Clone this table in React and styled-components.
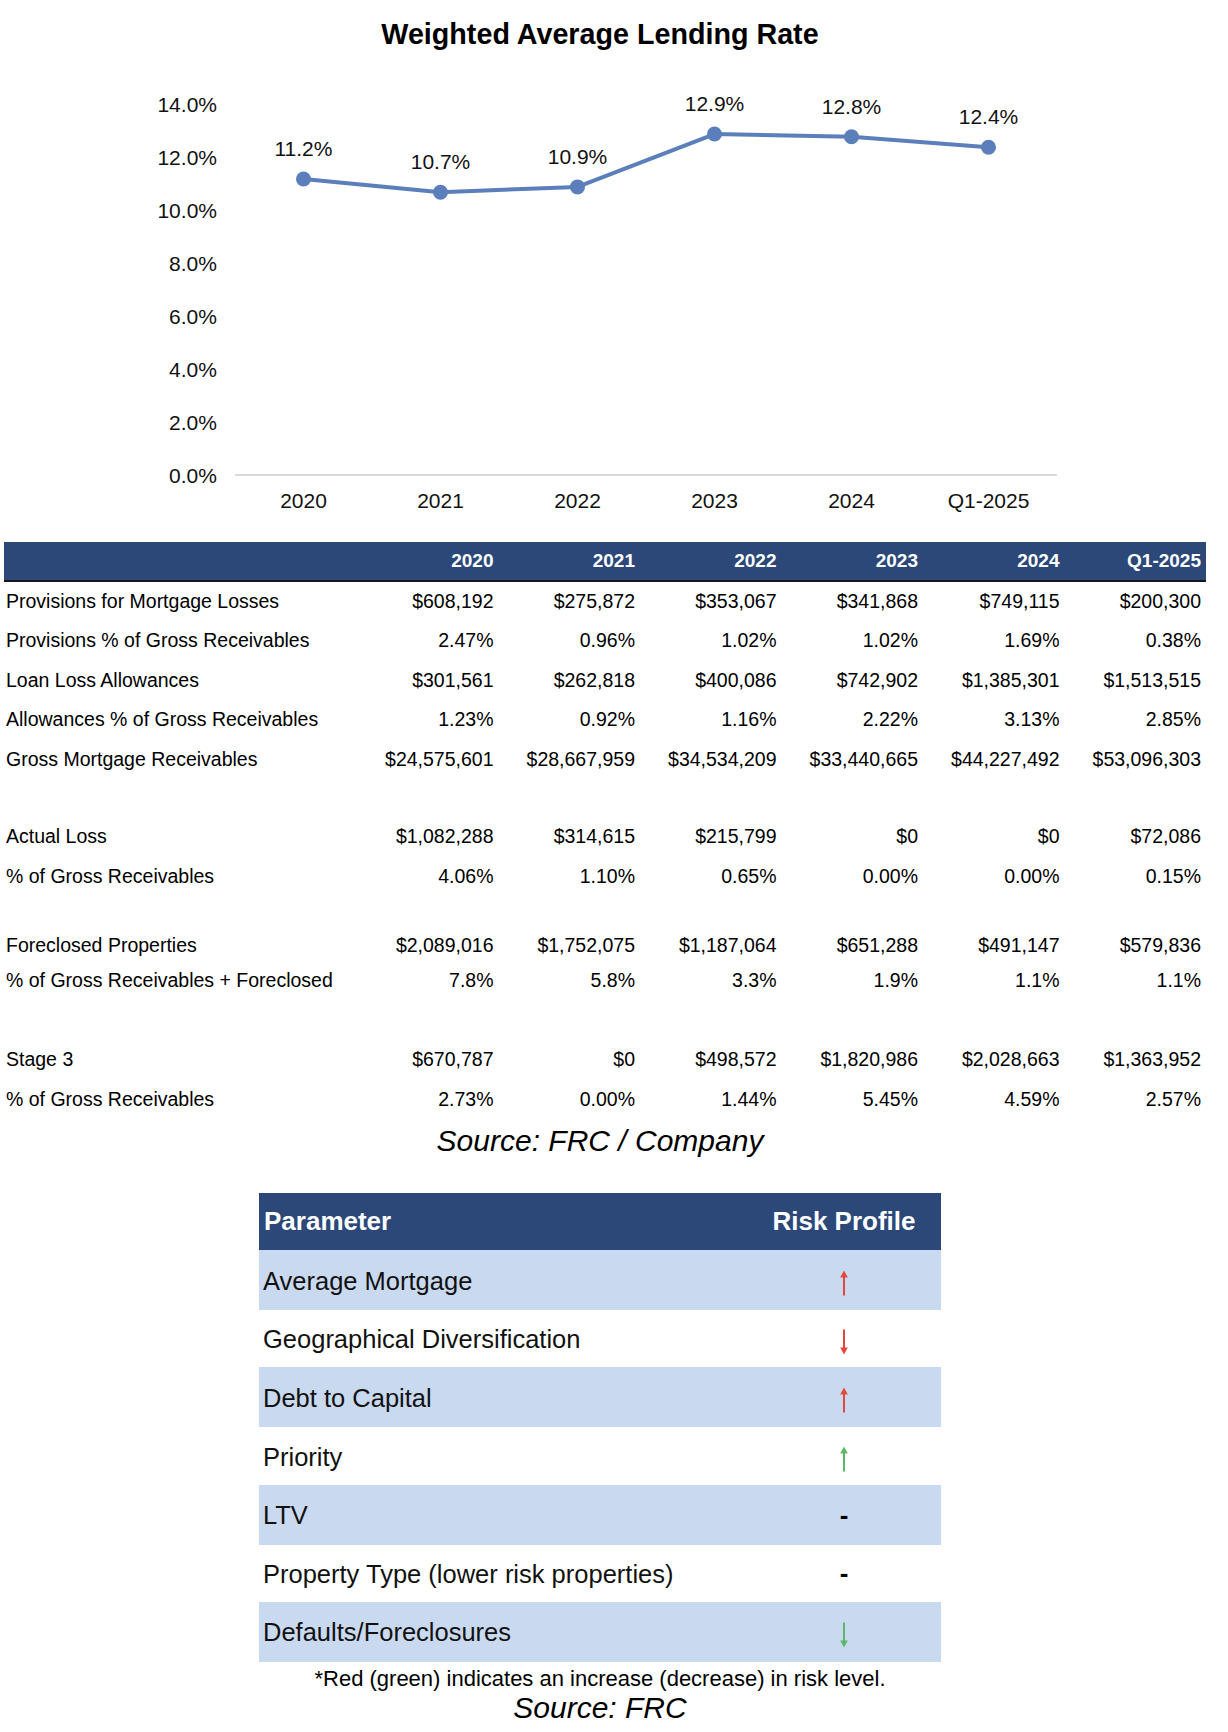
import React from "react";
import styled, { createGlobalStyle } from "styled-components";

const GlobalStyle = createGlobalStyle`
  html, body { margin: 0; padding: 0; background: #ffffff; }
  body { font-family: "Liberation Sans", Arial, sans-serif; color: #000; }
`;

const NAVY = "#2b4879";
const LIGHT = "#c9d9ef";

const Page = styled.div`
  width: 1200px;
  display: flex;
  flex-direction: column;
`;

const ChartTitle = styled.h2`
  margin: 18px 0 0;
  height: 32px;
  line-height: 32px;
  font-size: 28.7px;
  font-weight: 700;
  text-align: center;
`;

const ChartSvg = styled.svg`
  display: block;
  width: 1200px;
  height: 492px;
`;

const AxisText = styled.text`
  font-family: "Liberation Sans", Arial, sans-serif;
  font-size: 21px;
  fill: #111;
`;

const DataLabel = styled.text`
  font-family: "Liberation Sans", Arial, sans-serif;
  font-size: 21px;
  fill: #111;
`;

const DataTable = styled.div`
  margin-left: 4px;
  width: 1202px;
  display: flex;
  flex-direction: column;
`;

const HeadRow = styled.div`
  display: grid;
  grid-template-columns: 1fr repeat(6, 141.5px);
  height: 37.6px;
  background: ${NAVY};
  border-bottom: 2px solid #15171c;
  align-items: center;
`;

const HeadCell = styled.div`
  color: #fff;
  font-weight: 700;
  font-size: 19px;
  text-align: right;
  padding-right: 5px;
`;

const Row = styled.div`
  display: grid;
  grid-template-columns: 1fr repeat(6, 141.5px);
  height: ${(p) => p.$h}px;
  align-items: center;
`;

const Spacer = styled.div`
  height: ${(p) => p.$h}px;
`;

const LabelCell = styled.div`
  font-size: 19.5px;
  padding-left: 2px;
  white-space: nowrap;
`;

const ValueCell = styled.div`
  font-size: 19.5px;
  text-align: right;
  padding-right: 5px;
  white-space: nowrap;
`;

const Source = styled.div`
  margin-top: ${(p) => p.$mt}px;
  height: 30px;
  line-height: 30px;
  font-size: 30px;
  font-style: italic;
  text-align: center;
`;

const RiskTable = styled.div`
  margin: 37px auto 0;
  width: 682px;
  display: flex;
  flex-direction: column;
`;

const RiskHead = styled.div`
  display: grid;
  grid-template-columns: 488px 1fr;
  height: 57px;
  background: ${NAVY};
  align-items: center;
  color: #fff;
  font-weight: 700;
  font-size: 26px;
`;

const RiskHeadParam = styled.div`
  padding-left: 5px;
`;

const RiskHeadProfile = styled.div`
  text-align: center;
`;

const RiskRow = styled.div`
  display: grid;
  grid-template-columns: 488px 1fr;
  height: ${(p) => (p.$shade ? 60 : 57.3)}px;
  background: ${(p) => (p.$shade ? LIGHT : "#fff")};
  align-items: center;
`;

const ParamCell = styled.div`
  padding-left: 4px;
  padding-top: 2px;
  font-size: 25.5px;
  color: #111;
  white-space: nowrap;
`;

const ProfileCell = styled.div`
  display: flex;
  justify-content: center;
  align-items: center;
  padding-top: 6px;
`;

const Dash = styled.span`
  font-size: 26px;
  font-weight: 700;
  line-height: 1;
  margin-top: -6px;
`;

const Footnote = styled.div`
  margin-top: 5px;
  height: 24px;
  line-height: 24px;
  font-size: 22px;
  text-align: center;
`;

const Arrow = ({ dir, color }) => (
  <svg width="12" height="26" viewBox="0 0 12 26">
    <g transform={dir === "down" ? "rotate(180 6 13)" : undefined}>
      <rect x="5" y="5" width="2" height="20.5" fill={color} />
      <path d="M6 0.5 L9.8 7.5 L2.2 7.5 Z" fill={color} />
    </g>
  </svg>
);

const years = ["2020", "2021", "2022", "2023", "2024", "Q1-2025"];
const rates = [11.2, 10.7, 10.9, 12.9, 12.8, 12.4];
const ticks = [0, 2, 4, 6, 8, 10, 12, 14];
const PX = 26.43;
const Y0 = 425;
const catX = (i) => 303.5 + 137 * i;
const valY = (v) => Y0 - v * PX;

const tableRows = [
  { label: "Provisions for Mortgage Losses", values: ["$608,192", "$275,872", "$353,067", "$341,868", "$749,115", "$200,300"], h: 39.5 },
  { label: "Provisions % of Gross Receivables", values: ["2.47%", "0.96%", "1.02%", "1.02%", "1.69%", "0.38%"], h: 39.5 },
  { label: "Loan Loss Allowances", values: ["$301,561", "$262,818", "$400,086", "$742,902", "$1,385,301", "$1,513,515"], h: 39.5 },
  { label: "Allowances % of Gross Receivables", values: ["1.23%", "0.92%", "1.16%", "2.22%", "3.13%", "2.85%"], h: 39.5 },
  { label: "Gross Mortgage Receivables", values: ["$24,575,601", "$28,667,959", "$34,534,209", "$33,440,665", "$44,227,492", "$53,096,303"], h: 39.5 },
  { spacer: 38 },
  { label: "Actual Loss", values: ["$1,082,288", "$314,615", "$215,799", "$0", "$0", "$72,086"], h: 39.5 },
  { label: "% of Gross Receivables", values: ["4.06%", "1.10%", "0.65%", "0.00%", "0.00%", "0.15%"], h: 40.5 },
  { spacer: 31 },
  { label: "Foreclosed Properties", values: ["$2,089,016", "$1,752,075", "$1,187,064", "$651,288", "$491,147", "$579,836"], h: 35 },
  { label: "% of Gross Receivables + Foreclosed", values: ["7.8%", "5.8%", "3.3%", "1.9%", "1.1%", "1.1%"], h: 35 },
  { spacer: 41 },
  { label: "Stage 3", values: ["$670,787", "$0", "$498,572", "$1,820,986", "$2,028,663", "$1,363,952"], h: 40 },
  { label: "% of Gross Receivables", values: ["2.73%", "0.00%", "1.44%", "5.45%", "4.59%", "2.57%"], h: 40 },
];

const RED = "#e4463b";
const GREEN = "#5ab868";

const riskRows = [
  { label: "Average Mortgage", mark: { dir: "up", color: RED } },
  { label: "Geographical Diversification", mark: { dir: "down", color: RED } },
  { label: "Debt to Capital", mark: { dir: "up", color: RED } },
  { label: "Priority", mark: { dir: "up", color: GREEN } },
  { label: "LTV", mark: null },
  { label: "Property Type (lower risk properties)", mark: null },
  { label: "Defaults/Foreclosures", mark: { dir: "down", color: GREEN } },
];

export default function App() {
  const points = rates.map((v, i) => `${catX(i)},${valY(v)}`).join(" ");
  return (
    <>
      <GlobalStyle />
      <Page>
        <ChartTitle>Weighted Average Lending Rate</ChartTitle>
        <ChartSvg viewBox="0 0 1200 492">
          {ticks.map((t) => (
            <AxisText key={t} x={217} y={valY(t) + 7.5} textAnchor="end">
              {t.toFixed(1)}%
            </AxisText>
          ))}
          <line x1={235} x2={1057} y1={Y0} y2={Y0} stroke="#d9d9d9" strokeWidth={2} />
          <polyline points={points} fill="none" stroke="#5b7fba" strokeWidth={4} strokeLinejoin="round" />
          {rates.map((v, i) => (
            <circle key={i} cx={catX(i)} cy={valY(v)} r={7.5} fill="#5b7fba" />
          ))}
          {rates.map((v, i) => (
            <DataLabel key={i} x={catX(i)} y={valY(v) - 23} textAnchor="middle">
              {v.toFixed(1)}%
            </DataLabel>
          ))}
          {years.map((y, i) => (
            <AxisText key={y} x={catX(i)} y={457.5} textAnchor="middle">
              {y}
            </AxisText>
          ))}
        </ChartSvg>

        <DataTable>
          <HeadRow>
            <div />
            {years.map((y) => (
              <HeadCell key={y}>{y}</HeadCell>
            ))}
          </HeadRow>
          {tableRows.map((r, i) =>
            r.spacer ? (
              <Spacer key={i} $h={r.spacer} />
            ) : (
              <Row key={i} $h={r.h}>
                <LabelCell>{r.label}</LabelCell>
                {r.values.map((v, j) => (
                  <ValueCell key={j}>{v}</ValueCell>
                ))}
              </Row>
            )
          )}
        </DataTable>
        <Source $mt={7}>Source: FRC / Company</Source>

        <RiskTable>
          <RiskHead>
            <RiskHeadParam>Parameter</RiskHeadParam>
            <RiskHeadProfile>Risk Profile</RiskHeadProfile>
          </RiskHead>
          {riskRows.map((r, i) => (
            <RiskRow key={r.label} $shade={i % 2 === 0}>
              <ParamCell>{r.label}</ParamCell>
              <ProfileCell>
                {r.mark ? <Arrow dir={r.mark.dir} color={r.mark.color} /> : <Dash>-</Dash>}
              </ProfileCell>
            </RiskRow>
          ))}
        </RiskTable>
        <Footnote>*Red (green) indicates an increase (decrease) in risk level.</Footnote>
        <Source $mt={2}>Source: FRC</Source>
      </Page>
    </>
  );
}
